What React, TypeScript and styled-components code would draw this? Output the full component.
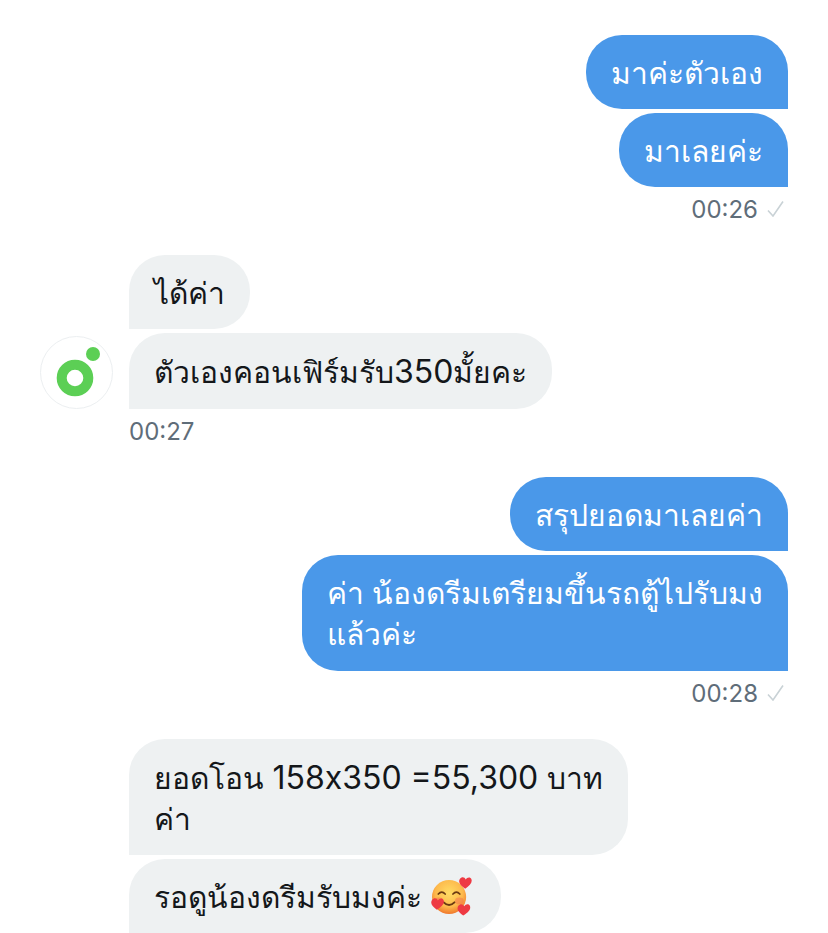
import React, { FC, PropsWithChildren } from 'react';
import styled, { createGlobalStyle } from 'styled-components';

const GlobalStyle = createGlobalStyle`
	html, body {
		margin: 0;
		padding: 0;
		background: #fff;
		overflow: hidden;
	}
`;

const Page = styled.div`
	width: 828px;
	height: 933px;
	overflow: hidden;
	box-sizing: border-box;
	padding: 35px 40px 0;
	display: flex;
	flex-direction: column;
	font-family: Inter, 'Liberation Sans', 'Noto Sans', sans-serif;
`;

const Group = styled.div<{ $gap: number }>`
	display: flex;
	flex-direction: column;
	margin-bottom: ${(p) => p.$gap}px;
`;

const Row = styled.div<{ $mine?: boolean }>`
	display: flex;
	align-items: flex-end;
	justify-content: ${(p) => (p.$mine ? 'flex-end' : 'flex-start')};
`;

const Stack = styled.div<{ $mine?: boolean }>`
	display: flex;
	flex-direction: column;
	gap: 4px;
	align-items: ${(p) => (p.$mine ? 'flex-end' : 'flex-start')};
`;

const Bubble = styled.div<{ $mine?: boolean; $height: number }>`
	box-sizing: border-box;
	height: ${(p) => p.$height}px;
	padding: 0 25px;
	display: flex;
	align-items: center;
	gap: 9px;
	font-size: 30px;
	line-height: 41px;
	white-space: nowrap;
	color: ${(p) => (p.$mine ? '#ffffff' : '#14171a')};
	background: ${(p) => (p.$mine ? '#4a98e9' : '#eef1f2')};
	border-radius: ${(p) => (p.$mine ? '36px 36px 0 36px' : '36px 36px 36px 0')};
`;

const BubbleText = styled.span`
	display: block;
	padding-top: 2px;
`;

// latin digits sit a bit larger than the thai around them
const Num = styled.span`
	font-size: 32px;
`;

const Emoji = styled.span`
	display: flex;
	margin-right: 4px;
`;

const AvatarSlot = styled.div`
	width: 89px;
	flex: none;
`;

const Avatar = styled.div`
	width: 73px;
	height: 73px;
	box-sizing: border-box;
	border: 1px solid #eceff1;
	border-radius: 50%;
	background: #fff;
	display: flex;
	align-items: center;
	justify-content: center;
`;

const Meta = styled.div<{ $mine?: boolean }>`
	display: flex;
	align-items: center;
	gap: 9px;
	height: 24px;
	margin-top: 10px;
	justify-content: ${(p) => (p.$mine ? 'flex-end' : 'flex-start')};
	margin-left: ${(p) => (p.$mine ? 0 : 89)}px;
	margin-right: ${(p) => (p.$mine ? 4 : 0)}px;
	font-size: 24px;
	color: #5f6d79;
`;

const Logo = () => (
	<svg width='71' height='71' viewBox='0 0 71 71'>
		<circle cx='34' cy='41' r='13.300' fill='none' stroke='#5ccf55' strokeWidth='10' />
		<circle cx='52' cy='17' r='7' fill='#5ccf55' />
	</svg>
);

const Check = () => (
	<svg width='17' height='16' viewBox='0 0 17 16' fill='none'>
		<path d='M1 9.500 L6 15 L16 0.500' stroke='#c9d2d6' strokeWidth='1.600' />
	</svg>
);

const SmilingHearts = () => (
	<svg width='41' height='42' viewBox='0 0 42 42'>
		<defs>
			<radialGradient id='face' cx='50%' cy='38%' r='62%'>
				<stop offset='0%' stopColor='#ffdc64' />
				<stop offset='65%' stopColor='#fdb94c' />
				<stop offset='100%' stopColor='#f0782c' />
			</radialGradient>
		</defs>
		<circle cx='18.500' cy='22' r='17.500' fill='url(#face)' />
		<ellipse cx='8' cy='26' fill='#f2784f' opacity='0.55' rx='4.500' ry='3.500' />
		<ellipse cx='29' cy='26' fill='#f2784f' opacity='0.55' rx='4.500' ry='3.500' />
		<path d='M7.500 19 Q11 15 14.500 19' fill='none' stroke='#6b3a12' strokeWidth='1.700' strokeLinecap='round' />
		<path d='M22.500 19 Q26 15 29.500 19' fill='none' stroke='#6b3a12' strokeWidth='1.700' strokeLinecap='round' />
		<path d='M13 27.500 Q18.500 33 24 27.500' fill='none' stroke='#6b3a12' strokeWidth='1.900' strokeLinecap='round' />
		<path d='M35 13.500 C30 10 27.500 7 29.500 3.500 C31.500 1 34.500 1.500 35.500 4 C37 1.500 40.500 1 41.500 4 C42.500 7.500 39.500 10.500 35 13.500Z' fill='#ee3a43' />
		<path d='M6 35 C1 31.500 -1 28.500 1 25 C3 22.500 6 23 7 25.500 C8.500 23 12 22.500 13 25.500 C14 29 11 32 6 35Z' fill='#ee3a43' />
		<path d='M33 41 C28 37.500 26 34.500 28 31 C30 28.500 33 29 34 31.500 C35.500 29 39 28.500 40 31.500 C41 35 38 38 33 41Z' fill='#ee3a43' />
	</svg>
);

interface IThreadProps extends PropsWithChildren {
	mine?: boolean;
	time?: string;
	avatar?: boolean;
	gap: number;
}

const Thread: FC<IThreadProps> = ({ mine, time, avatar, gap, children }) => (
	<Group $gap={gap}>
		<Row $mine={mine}>
			{!mine && (
				<AvatarSlot>
					{avatar && (
						<Avatar>
							<Logo />
						</Avatar>
					)}
				</AvatarSlot>
			)}
			<Stack $mine={mine}>{children}</Stack>
		</Row>
		{time && (
			<Meta $mine={mine}>
				{time}
				{mine && <Check />}
			</Meta>
		)}
	</Group>
);

const App: FC = () => (
	<Page>
		<GlobalStyle />
		<Thread mine time='00:26' gap={34}>
			<Bubble $mine $height={74}><BubbleText>มาค่ะตัวเอง</BubbleText></Bubble>
			<Bubble $mine $height={74}><BubbleText>มาเลยค่ะ</BubbleText></Bubble>
		</Thread>
		<Thread time='00:27' avatar gap={34}>
			<Bubble $height={74}><BubbleText>ได้ค่า</BubbleText></Bubble>
			<Bubble $height={76}><BubbleText>ตัวเองคอนเฟิร์มรับ<Num>350</Num>มั้ยคะ</BubbleText></Bubble>
		</Thread>
		<Thread mine time='00:28' gap={34}>
			<Bubble $mine $height={74}><BubbleText>สรุปยอดมาเลยค่า</BubbleText></Bubble>
			<Bubble $mine $height={116}>
				<BubbleText>ค่า น้องดรีมเตรียมขึ้นรถตู้ไปรับมง<br />แล้วค่ะ</BubbleText>
			</Bubble>
		</Thread>
		<Thread gap={0}>
			<Bubble $height={116}>
				<BubbleText>ยอดโอน <Num>158x350 =55,300</Num> บาท<br />ค่า</BubbleText>
			</Bubble>
			<Bubble $height={74}>
				<BubbleText>รอดูน้องดรีมรับมงค่ะ</BubbleText>
				<Emoji><SmilingHearts /></Emoji>
			</Bubble>
		</Thread>
	</Page>
);

export default App;
